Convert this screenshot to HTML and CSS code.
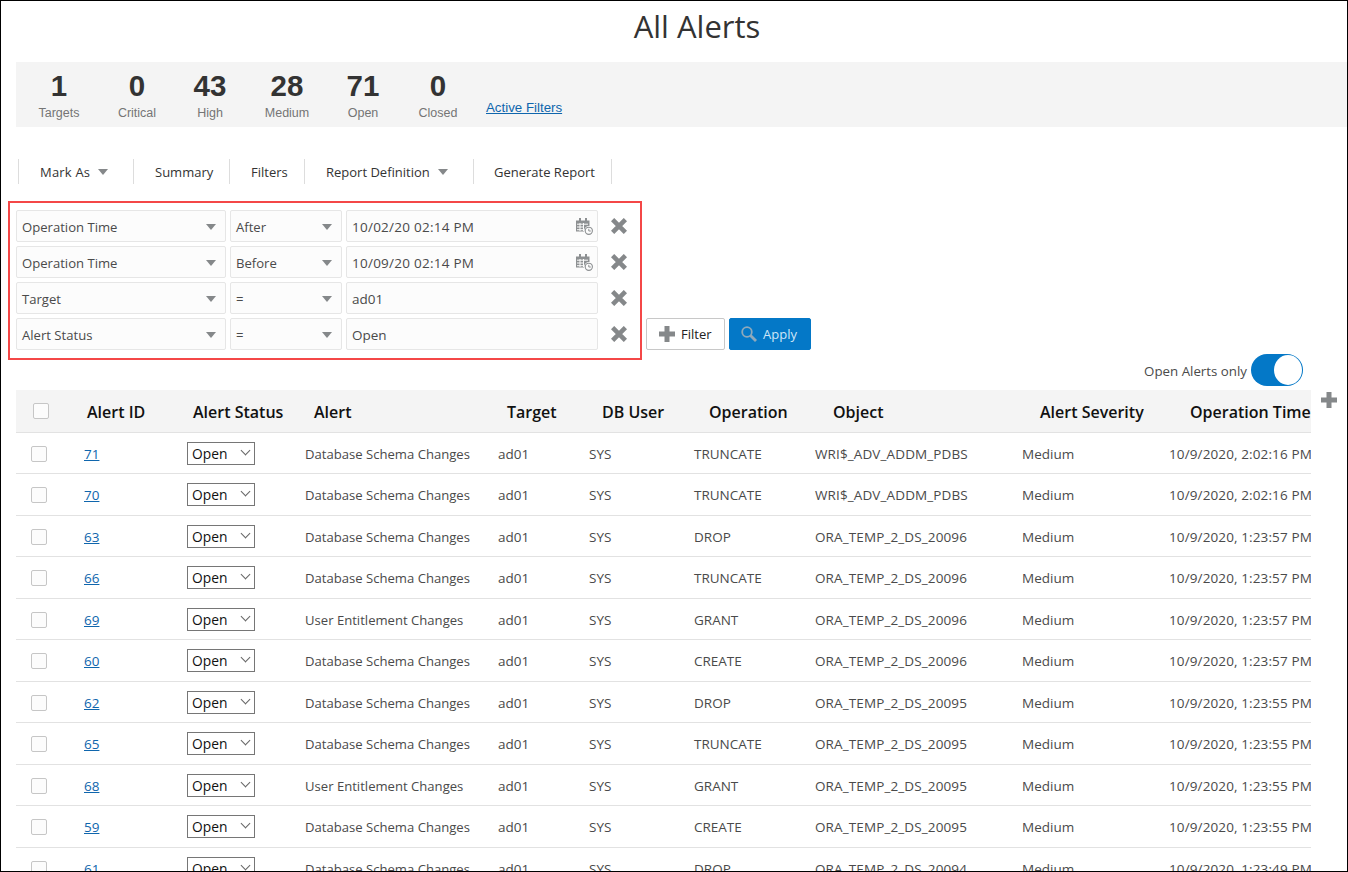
FILE: index.html
```html
<!DOCTYPE html>
<html lang="en">
<head>
    <meta charset="UTF-8">
    <title>All Alerts</title>
    <link rel="stylesheet" href="styles.css">
</head>
<body>
    <div class="frame">
        <h1 class="page-title">All Alerts</h1>

        <section class="stats">
            <div class="stat"><strong>1</strong><span>Targets</span></div>
            <div class="stat"><strong>0</strong><span>Critical</span></div>
            <div class="stat"><strong>43</strong><span>High</span></div>
            <div class="stat"><strong>28</strong><span>Medium</span></div>
            <div class="stat"><strong>71</strong><span>Open</span></div>
            <div class="stat"><strong>0</strong><span>Closed</span></div>
            <a class="active-filters" href="#">Active Filters</a>
        </section>

        <nav class="toolbar">
            <div class="tool tool-mark">Mark As<i class="caret"></i></div>
            <div class="tool tool-summary">Summary</div>
            <div class="tool tool-filters">Filters</div>
            <div class="tool tool-report">Report Definition<i class="caret"></i></div>
            <div class="tool tool-generate">Generate Report</div>
        </nav>

        <section class="filter-area">
            <div class="filter-panel">
                <div class="filter-row">
                    <div class="field field-name">Operation Time<i class="caret"></i></div>
                    <div class="field field-op">After<i class="caret"></i></div>
                    <div class="field field-value field-date">10/02/20 02:14 PM
                        <svg class="cal-icon" viewBox="0 0 17 17"><use href="#cal"/></svg>
                    </div>
                    <svg class="remove" viewBox="0 0 16 16"><use href="#cross"/></svg>
                </div>
                <div class="filter-row">
                    <div class="field field-name">Operation Time<i class="caret"></i></div>
                    <div class="field field-op">Before<i class="caret"></i></div>
                    <div class="field field-value field-date">10/09/20 02:14 PM
                        <svg class="cal-icon" viewBox="0 0 17 17"><use href="#cal"/></svg>
                    </div>
                    <svg class="remove" viewBox="0 0 16 16"><use href="#cross"/></svg>
                </div>
                <div class="filter-row">
                    <div class="field field-name">Target<i class="caret"></i></div>
                    <div class="field field-op">=<i class="caret"></i></div>
                    <div class="field field-value">ad01</div>
                    <svg class="remove" viewBox="0 0 16 16"><use href="#cross"/></svg>
                </div>
                <div class="filter-row">
                    <div class="field field-name">Alert Status<i class="caret"></i></div>
                    <div class="field field-op">=<i class="caret"></i></div>
                    <div class="field field-value">Open</div>
                    <svg class="remove" viewBox="0 0 16 16"><use href="#cross"/></svg>
                </div>
            </div>
            <button class="btn btn-add" type="button">
                <svg class="btn-icon" viewBox="0 0 16 16"><path d="M8 0v16M0 8h16" stroke="#85888a" stroke-width="5" fill="none"/></svg>
                Filter
            </button>
            <button class="btn btn-apply" type="button">
                <svg class="btn-icon" viewBox="0 0 16 16"><circle cx="6" cy="6" r="4.8" fill="none" stroke="#8fa9bb" stroke-width="1.8"/><path d="M9.5 9.5L15 15" stroke="#8fa9bb" stroke-width="2.8" fill="none"/></svg>
                Apply
            </button>
        </section>

        <div class="toggle-row">
            <span>Open Alerts only</span>
            <div class="toggle"><div class="knob"></div></div>
        </div>

        <div class="table-area">
            <div class="alerts">
                <div class="row head">
                    <div><span class="check"></span></div>
                    <div>Alert ID</div>
                    <div>Alert Status</div>
                    <div>Alert</div>
                    <div>Target</div>
                    <div>DB User</div>
                    <div>Operation</div>
                    <div>Object</div>
                    <div>Alert Severity</div>
                    <div>Operation Time</div>
                </div>
                <div class="row">
                    <div><span class="check"></span></div><div><a href="#">71</a></div><div><span class="status">Open</span></div>
                    <div>Database Schema Changes</div><div>ad01</div><div>SYS</div><div>TRUNCATE</div>
                    <div>WRI$_ADV_ADDM_PDBS</div><div>Medium</div><div>10/9/2020, 2:02:16 PM</div>
                </div>
                <div class="row">
                    <div><span class="check"></span></div><div><a href="#">70</a></div><div><span class="status">Open</span></div>
                    <div>Database Schema Changes</div><div>ad01</div><div>SYS</div><div>TRUNCATE</div>
                    <div>WRI$_ADV_ADDM_PDBS</div><div>Medium</div><div>10/9/2020, 2:02:16 PM</div>
                </div>
                <div class="row">
                    <div><span class="check"></span></div><div><a href="#">63</a></div><div><span class="status">Open</span></div>
                    <div>Database Schema Changes</div><div>ad01</div><div>SYS</div><div>DROP</div>
                    <div>ORA_TEMP_2_DS_20096</div><div>Medium</div><div>10/9/2020, 1:23:57 PM</div>
                </div>
                <div class="row">
                    <div><span class="check"></span></div><div><a href="#">66</a></div><div><span class="status">Open</span></div>
                    <div>Database Schema Changes</div><div>ad01</div><div>SYS</div><div>TRUNCATE</div>
                    <div>ORA_TEMP_2_DS_20096</div><div>Medium</div><div>10/9/2020, 1:23:57 PM</div>
                </div>
                <div class="row">
                    <div><span class="check"></span></div><div><a href="#">69</a></div><div><span class="status">Open</span></div>
                    <div>User Entitlement Changes</div><div>ad01</div><div>SYS</div><div>GRANT</div>
                    <div>ORA_TEMP_2_DS_20096</div><div>Medium</div><div>10/9/2020, 1:23:57 PM</div>
                </div>
                <div class="row">
                    <div><span class="check"></span></div><div><a href="#">60</a></div><div><span class="status">Open</span></div>
                    <div>Database Schema Changes</div><div>ad01</div><div>SYS</div><div>CREATE</div>
                    <div>ORA_TEMP_2_DS_20096</div><div>Medium</div><div>10/9/2020, 1:23:57 PM</div>
                </div>
                <div class="row">
                    <div><span class="check"></span></div><div><a href="#">62</a></div><div><span class="status">Open</span></div>
                    <div>Database Schema Changes</div><div>ad01</div><div>SYS</div><div>DROP</div>
                    <div>ORA_TEMP_2_DS_20095</div><div>Medium</div><div>10/9/2020, 1:23:55 PM</div>
                </div>
                <div class="row">
                    <div><span class="check"></span></div><div><a href="#">65</a></div><div><span class="status">Open</span></div>
                    <div>Database Schema Changes</div><div>ad01</div><div>SYS</div><div>TRUNCATE</div>
                    <div>ORA_TEMP_2_DS_20095</div><div>Medium</div><div>10/9/2020, 1:23:55 PM</div>
                </div>
                <div class="row">
                    <div><span class="check"></span></div><div><a href="#">68</a></div><div><span class="status">Open</span></div>
                    <div>User Entitlement Changes</div><div>ad01</div><div>SYS</div><div>GRANT</div>
                    <div>ORA_TEMP_2_DS_20095</div><div>Medium</div><div>10/9/2020, 1:23:55 PM</div>
                </div>
                <div class="row">
                    <div><span class="check"></span></div><div><a href="#">59</a></div><div><span class="status">Open</span></div>
                    <div>Database Schema Changes</div><div>ad01</div><div>SYS</div><div>CREATE</div>
                    <div>ORA_TEMP_2_DS_20095</div><div>Medium</div><div>10/9/2020, 1:23:55 PM</div>
                </div>
                <div class="row">
                    <div><span class="check"></span></div><div><a href="#">61</a></div><div><span class="status">Open</span></div>
                    <div>Database Schema Changes</div><div>ad01</div><div>SYS</div><div>DROP</div>
                    <div>ORA_TEMP_2_DS_20094</div><div>Medium</div><div>10/9/2020, 1:23:49 PM</div>
                </div>
            </div>
            <svg class="add-column" viewBox="0 0 16 16"><path d="M8 0v16M0 8h16" stroke="#85888a" stroke-width="5" fill="none"/></svg>
        </div>
    </div>

    <!-- shared icons -->
    <svg class="icon-defs" width="0" height="0">
        <symbol id="cross" viewBox="0 0 16 16">
            <path d="M1.6 1.6L14.4 14.4M14.4 1.6L1.6 14.4" stroke="#85888a" stroke-width="4.6" fill="none"/>
        </symbol>
        <symbol id="cal" viewBox="0 0 17 17">
            <path d="M0 2.5h3V0h2v2.500h4V0h2v2.500h2.500V8A5 5 0 0 0 8 13.500H0z" fill="#8d9092"/>
            <path d="M1 6.200h11M1 9h7M1 11.700h6.500M4 5v8M7.500 5v8" stroke="#fcfcfc" stroke-width="1" fill="none"/>
            <circle cx="12.800" cy="12.800" r="3.600" fill="#fcfcfc" stroke="#8d9092" stroke-width="1.100"/>
            <path d="M12.800 10.800v2.200h2" stroke="#8d9092" stroke-width="1" fill="none"/>
        </symbol>
    </svg>
</body>
</html>
```

FILE: styles.css
```css
* {
    box-sizing: border-box;
}

body {
    margin: 0;
    background-color: white;
    font-family: "Open Sans", "Noto Sans", sans-serif;
    color: #4a4a4a;
}

.frame {
    width: 1348px;
    height: 872px;
    border: 1px solid #000;
    overflow: hidden;
}

.page-title {
    margin: 0;
    height: 61px;
    padding: 3px 0 0 46px;
    text-align: center;
    font-size: 31px;
    line-height: 44px;
    font-weight: 400;
    color: #333;
}

/* Summary band */
.stats {
    display: flex;
    align-items: flex-start;
    height: 65px;
    margin-left: 15px;
    padding-left: 5px;
    background-color: #f4f4f4;
    font-family: "Liberation Sans", Arial, sans-serif;
}

.stat {
    display: flex;
    flex-direction: column;
    align-items: center;
    width: 76px;
    padding-top: 7px;
}

.stat:nth-child(2) { margin: 0 -2px 0 2px; }
.stat:nth-child(3) { margin: 0 1px 0 -1px; }
.stat:nth-child(6) { margin: 0 1px 0 -1px; }

.stat strong {
    font-size: 29.500px;
    line-height: 34px;
    color: #333;
}

.stat span {
    font-size: 12.500px;
    line-height: 16px;
    margin-top: 2px;
    color: #757575;
}

.active-filters {
    margin: 38px 0 0 9px;
    font-size: 13.300px;
    line-height: 16px;
    color: #0f66ad;
}

/* Toolbar */
.toolbar {
    display: flex;
    height: 25px;
    margin: 32px 0 0 17px;
    font-size: 13px;
    color: #333;
}

.tool {
    display: flex;
    align-items: center;
    height: 100%;
    border-left: 1px solid #ddd;
    white-space: nowrap;
}

.tool-mark { width: 115px; padding-left: 21px; letter-spacing: 0.2px; }
.tool-summary { width: 96px; padding-left: 21px; }
.tool-filters { width: 75px; padding-left: 21px; }
.tool-report { width: 169px; padding-left: 21px; }
.tool-generate { width: 139px; padding-left: 20px; border-right: 1px solid #ddd; }

.caret {
    width: 0;
    height: 0;
    margin-left: 8px;
    border-left: 5px solid transparent;
    border-right: 5px solid transparent;
    border-top: 6px solid #85888a;
}

/* Filter builder */
.filter-area {
    display: flex;
    align-items: flex-end;
    margin: 17px 0 0 7px;
}

.filter-panel {
    display: flex;
    flex-direction: column;
    gap: 4px;
    width: 634px;
    height: 159px;
    padding: 7px 6px 8px;
    border: 2px solid #f44747;
}

.filter-row {
    display: flex;
    align-items: center;
    gap: 4px;
    height: 32px;
}

.field {
    position: relative;
    display: flex;
    align-items: center;
    height: 32px;
    padding: 2px 0 0 5px;
    background-color: #fcfcfc;
    border: 1px solid #e6e6e6;
    border-radius: 2px;
    font-size: 13.100px;
    white-space: nowrap;
}

.field-name { width: 210px; }
.field-op { width: 112px; }
.field-value { width: 252px; font-size: 13.500px; }
.field-date { letter-spacing: 0.25px; }

.field .caret {
    position: absolute;
    right: 9px;
    top: 13px;
    margin: 0;
}

.cal-icon {
    position: absolute;
    right: 4px;
    top: 7px;
    width: 17px;
    height: 17px;
}

.remove {
    width: 16px;
    height: 16px;
    margin-left: 9px;
}

.btn {
    display: flex;
    align-items: center;
    height: 32px;
    margin: 0 0 10px 4px;
    padding-top: 1px;
    border-radius: 2px;
    font-family: inherit;
    font-size: 13px;
    white-space: nowrap;
}

.btn-icon {
    width: 16px;
    height: 16px;
    flex-shrink: 0;
}

.btn-add {
    width: 79px;
    gap: 6px;
    padding-left: 12px;
    background-color: white;
    border: 1px solid #c8c8c8;
    color: #222;
}

.btn-apply {
    width: 82px;
    gap: 6px;
    padding-left: 11px;
    background-color: #0478c7;
    border: 1px solid #0478c7;
    color: #cfe6f7;
}

/* Switch above the table */
.toggle-row {
    display: flex;
    align-items: center;
    justify-content: flex-end;
    gap: 4px;
    height: 32px;
    margin: -6px 44px 0 0;
    padding-top: 1px;
    font-size: 13.300px;
}

.toggle {
    display: flex;
    justify-content: flex-end;
    width: 52px;
    height: 32px;
    margin-top: -1px;
    background-color: #0478c7;
    border-radius: 16px;
}

.knob {
    width: 28px;
    height: 30px;
    margin: 1px 1px 0 0;
    background-color: white;
    border-radius: 50%;
}

/* Table */
.table-area {
    display: flex;
    align-items: flex-start;
    margin: 4px 0 0 15px;
}

.alerts {
    width: 1295px;
    flex-shrink: 0;
    overflow: hidden;
    font-size: 13.500px;
}

.row {
    display: grid;
    grid-template-columns: 68px 103px 118px 193px 91px 105px 121px 207px 147px 142px;
    align-items: center;
    height: 41.500px;
    padding-top: 2px;
    border-bottom: 1px solid #e2e2e2;
    white-space: nowrap;
}

.row > div:first-child {
    padding-left: 15px;
    display: flex;
}

.row > div:nth-child(4) {
    font-size: 13.100px;
}

.row > div:nth-child(8) {
    letter-spacing: 0.12px;
}

.row > div:nth-child(10) {
    letter-spacing: 0.12px;
}

.head {
    grid-template-columns: 71px 106px 121px 193px 95px 107px 124px 207px 150px 121px;
    height: 42.500px;
    background-color: #f4f4f4;
    font-size: 16px;
    font-weight: 600;
    color: #111;
}

.head > div:first-child {
    padding-left: 17px;
    margin-top: -2px;
}

.head > div:nth-child(4) {
    font-size: 16px;
}

.head > div:nth-child(8),
.head > div:nth-child(10) {
    letter-spacing: 0;
}

.check {
    width: 16px;
    height: 16px;
    background-color: #fcfcfc;
    border: 1px solid #c6c6c6;
    border-radius: 2px;
}

.row a {
    color: #0f66ad;
}

.status {
    position: relative;
    display: block;
    width: 68px;
    height: 23px;
    margin-top: -1px;
    padding-left: 4px;
    border: 1px solid #767676;
    font-size: 13.800px;
    line-height: 21px;
    color: #111;
}

.status::after {
    content: "";
    position: absolute;
    right: 5px;
    top: 4px;
    width: 6px;
    height: 6px;
    border-right: 1px solid #666;
    border-bottom: 1px solid #666;
    transform: rotate(45deg);
}

.add-column {
    width: 16px;
    height: 16px;
    margin: 2px 0 0 10px;
    flex-shrink: 0;
}

.icon-defs {
    position: absolute;
}
```
